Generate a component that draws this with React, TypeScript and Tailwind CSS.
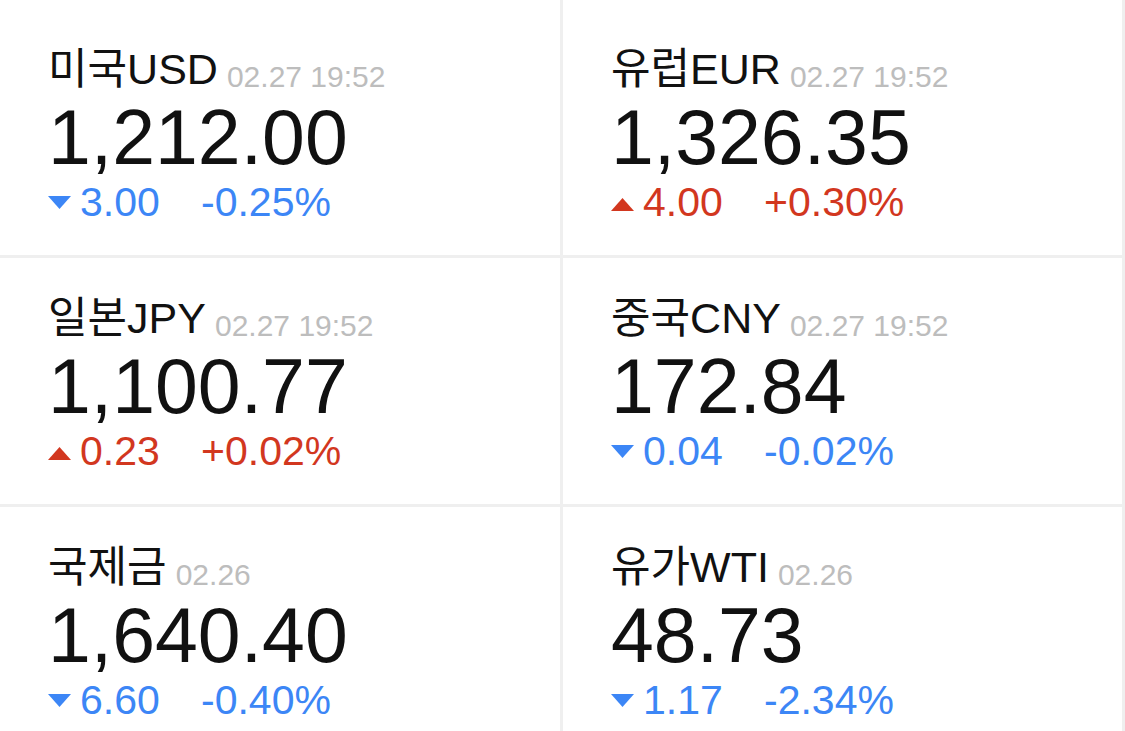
import React from "react";

type Quote = {
  name: string;
  time: string;
  price: string;
  change: string;
  percent: string;
  up: boolean;
};

const quotes: Quote[] = [
  { name: "미국USD", time: "02.27 19:52", price: "1,212.00", change: "3.00", percent: "-0.25%", up: false },
  { name: "유럽EUR", time: "02.27 19:52", price: "1,326.35", change: "4.00", percent: "+0.30%", up: true },
  { name: "일본JPY", time: "02.27 19:52", price: "1,100.77", change: "0.23", percent: "+0.02%", up: true },
  { name: "중국CNY", time: "02.27 19:52", price: "172.84", change: "0.04", percent: "-0.02%", up: false },
  { name: "국제금", time: "02.26", price: "1,640.40", change: "6.60", percent: "-0.40%", up: false },
  { name: "유가WTI", time: "02.26", price: "48.73", change: "1.17", percent: "-2.34%", up: false },
];

function Arrow({ up }: { up: boolean }) {
  return up ? (
    <svg width="23" height="13" viewBox="0 0 23 13" className="shrink-0 translate-y-[2px]">
      <polygon points="11.5,0 23,13 0,13" fill="#d2371f" />
    </svg>
  ) : (
    <svg width="23" height="13" viewBox="0 0 23 13" className="shrink-0">
      <polygon points="0,0 23,0 11.5,13" fill="#3c86f6" />
    </svg>
  );
}

function QuoteCell({ q, first }: { q: Quote; first: boolean }) {
  const tone = q.up ? "text-[#d2371f]" : "text-[#3c86f6]";
  return (
    <div
      className={`border-r-[3px] border-b-[3px] border-[#efefef] pl-[48px] ${
        first ? "h-[258px] pt-[48px]" : "h-[249px] pt-[39px]"
      }`}
    >
      <div className="flex items-baseline">
        <span className="text-[43px] leading-none text-[#111111]">{q.name}</span>
        <span className="relative top-[3px] ml-[9px] text-[30px] leading-none text-[#bdbdbd]">{q.time}</span>
      </div>
      <div className="mt-[8px] text-[77px] leading-none text-[#111111]">{q.price}</div>
      <div className={`mt-[6px] flex items-center text-[41px] leading-none ${tone}`}>
        <Arrow up={q.up} />
        <span className="ml-[9px] w-[80px]">{q.change}</span>
        <span className="ml-[41px]">{q.percent}</span>
      </div>
    </div>
  );
}

export default function App() {
  return (
    <div
      className="h-[731px] w-[1125px] overflow-hidden bg-white"
      style={{ fontFamily: '"Liberation Sans", "Noto Sans CJK KR", sans-serif' }}
    >
      <div className="grid grid-cols-[563px_562px]">
        {quotes.map((q, i) => (
          <QuoteCell key={q.name} q={q} first={i < 2} />
        ))}
      </div>
    </div>
  );
}
